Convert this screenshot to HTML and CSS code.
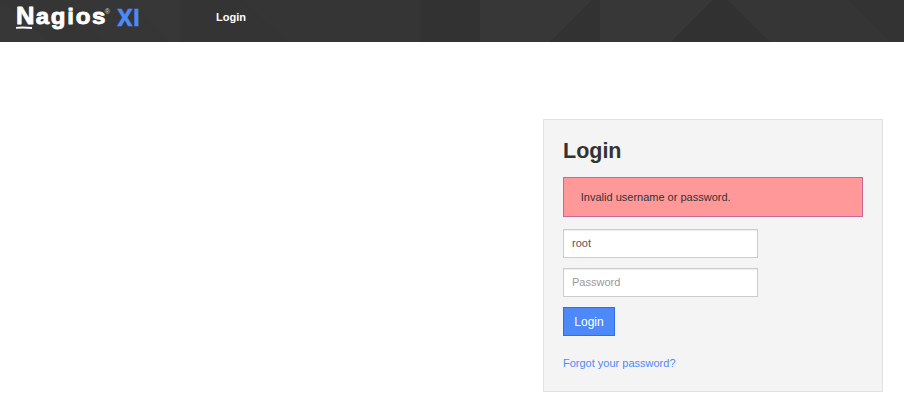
FILE: index.html
```
<!DOCTYPE html>
<html lang="en">

<head>
    <meta charset="UTF-8">
    <meta name="viewport" content="width=device-width, initial-scale=1.0">
    <title>Login - Nagios XI</title>
    <link rel="stylesheet" href="styles.css">
</head>

<body>
    <header class="header">
        <svg class="header-pattern" width="904" height="42" viewBox="0 0 904 42" aria-hidden="true">
            <rect width="904" height="42" fill="#353535"/>
            <path d="M0 0L50 42H0Z" fill="#373737"/>
            <path d="M60 0H180V42H105Z" fill="#363636"/>
            <path d="M130 0H180V42H172Z" fill="#373737"/>
            <path d="M180 0H240L289 42H180Z" fill="#343434"/>
            <path d="M420 0H480V42H420Z" fill="#323232"/>
            <path d="M480 0H592L550 42H480Z" fill="#373737"/>
            <path d="M592 0H600V42H550Z" fill="#323232"/>
            <path d="M600 0H713L671 42H600Z" fill="#373737"/>
            <path d="M713 0H728L770 42H671Z" fill="#313131"/>
            <path d="M728 0H780V42H770Z" fill="#363636"/>
            <path d="M848 0H904V42H890Z" fill="#333333"/>
        </svg>
        <a class="logo" href="#">
            <svg width="140" height="42" viewBox="0 0 140 42">
                <g class="logo-name">
                    <text x="1" y="24" font-size="23" textLength="18.5" lengthAdjust="spacingAndGlyphs">N</text>
                    <text transform="translate(20.7 24) scale(1.12 1)" font-size="21.5" textLength="62.3" lengthAdjust="spacing">agios</text>
                </g>
                <path d="M1 27.8Q8 27.1 17 28" fill="none" stroke="#fff" stroke-width="1.8"/>
                <text class="logo-mark" x="89.8" y="14">®</text>
                <text class="logo-xi" x="102" y="26" textLength="23" lengthAdjust="spacingAndGlyphs">XI</text>
            </svg>
        </a>
        <a class="nav-link" href="#">Login</a>
    </header>

    <main class="main">
        <form class="login-box">
            <h1>Login</h1>
            <div class="error">Invalid username or password.</div>
            <input type="text" value="root" placeholder="Username">
            <input type="password" placeholder="Password">
            <button type="submit">Login</button>
            <a class="forgot" href="#">Forgot your password?</a>
        </form>
    </main>
</body>

</html>
```
FILE: styles.css
```
* {
    box-sizing: border-box;
}

body {
    margin: 0;
    background-color: #fff;
    color: #333;
    font-family: "Liberation Sans", Arial, sans-serif;
    font-size: 11px;
    line-height: 16px;
}

a {
    color: #4d89f9;
    text-decoration: none;
}

.header {
    position: relative;
    display: flex;
    align-items: flex-start;
    height: 42px;
    overflow: hidden;
}

.header-pattern {
    position: absolute;
    top: 0;
    left: 0;
    z-index: -1;
}

.logo {
    margin-left: 15px;
}

.logo svg {
    display: block;
}

.logo-name {
    fill: #fff;
    stroke: #fff;
    stroke-width: 0.8;
    stroke-linejoin: round;
    font-weight: bold;
}

.logo-mark {
    fill: #ddd;
    font-size: 7px;
}

.logo-xi {
    fill: #4d89f9;
    stroke: #4d89f9;
    stroke-width: 0.3;
    font-family: Roboto, sans-serif;
    font-size: 24px;
    font-weight: bold;
}

.nav-link {
    margin: 9px 0 0 61px;
    color: #fff;
    font-weight: bold;
}

.main {
    display: flex;
    justify-content: flex-end;
    padding: 77px 21px 0 0;
}

.login-box {
    display: flex;
    flex-direction: column;
    align-items: flex-start;
    width: 340px;
    height: 273px;
    padding: 19px;
    border: 1px solid #e1e1e1;
    background-color: #f4f4f4;
}

h1 {
    margin: 0 0 14px;
    font-size: 21.5px;
    line-height: 24px;
}

.error {
    width: 100%;
    margin-bottom: 12px;
    padding: 11px 16.8px;
    border: 1px solid #cc6699;
    background-color: #ff9999;
}

input {
    width: 195px;
    height: 29px;
    margin: 0 0 10px;
    padding: 3px 8px 5px;
    border: 1px solid #ccc;
    border-radius: 0;
    background-color: #fff;
    box-shadow: inset 0 1px 1px rgba(0, 0, 0, 0.075);
    color: #555;
    font: inherit;
}

input::placeholder {
    color: #999;
}

button {
    width: 52px;
    height: 29px;
    margin: 0 0 19px;
    padding: 0;
    border: 1px solid #2b6fee;
    background-color: #4d89f9;
    color: #fff;
    font-family: inherit;
    font-size: 12px;
}
```
